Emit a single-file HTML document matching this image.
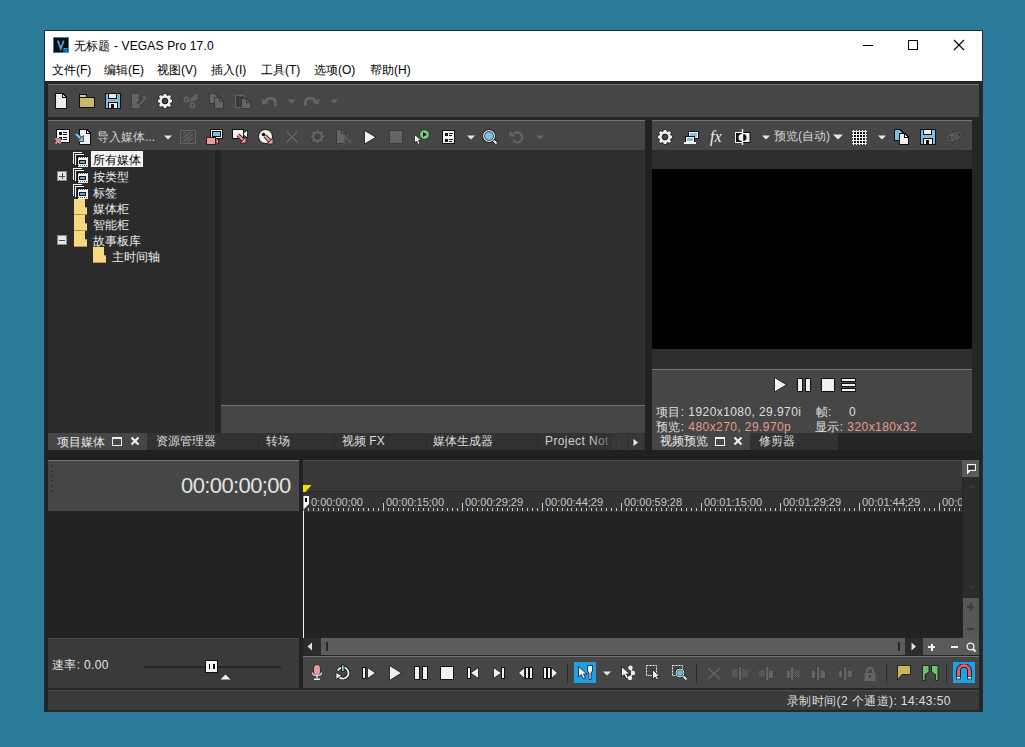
<!DOCTYPE html>
<html><head><meta charset="utf-8">
<style>
*{margin:0;padding:0;box-sizing:border-box}
html,body{width:1025px;height:747px;overflow:hidden;background:#2d7b9b;font-family:"Liberation Sans",sans-serif}
.a{position:absolute}
.t{position:absolute;white-space:nowrap;font-size:12px;line-height:14px}
svg{shape-rendering:crispEdges}
.g{shape-rendering:geometricPrecision}
</style></head><body>
<div class="a" style="left:44px;top:30px;width:939px;height:682px;background:#252525;border:1px solid #18303a"></div>
<div class="a" style="left:45px;top:31px;width:937px;height:50px;background:#fff;"></div>
<div class="a" style="left:53px;top:37px;width:16px;height:16px;background:#2f86bb;"></div>
<div class="a" style="left:54px;top:38px;width:14px;height:14px;background:#0c0c0c;"></div>
<svg class="a" style="left:53px;top:37px;shape-rendering:geometricPrecision" width="16" height="16" viewBox="0 0 16 16"><path d="M4.8 3.6L7.8 11.8L10.8 3.6" stroke="#45a8ec" stroke-width="1.7" fill="none"/><rect x="10.5" y="11" width="5.5" height="5" fill="#3b9ee0"/><rect x="11.5" y="12" width="1" height="3.2" fill="#0a2a50"/><path d="M13 12H15L14 15.2" stroke="#0a2a50" stroke-width="0.9" fill="none"/></svg>
<div class="t" style="left:74px;top:39px;color:#000;font-size:12px;letter-spacing:0.15px">无标题 - VEGAS Pro 17.0</div>
<div class="a" style="left:863px;top:45px;width:10px;height:1px;background:#000;"></div>
<div class="a" style="left:908px;top:40px;width:10px;height:10px;background:transparent;border:1px solid #000"></div>
<svg class="a" style="left:953px;top:39px;" width="12" height="12" viewBox="0 0 12 12"><path d="M1 1L11 11M11 1L1 11" stroke="#000" stroke-width="1.1" style="shape-rendering:geometricPrecision"/></svg>
<div class="t" style="left:52px;top:63px;color:#000;font-size:12px;">文件(F)</div>
<div class="t" style="left:104px;top:63px;color:#000;font-size:12px;">编辑(E)</div>
<div class="t" style="left:157px;top:63px;color:#000;font-size:12px;">视图(V)</div>
<div class="t" style="left:211px;top:63px;color:#000;font-size:12px;">插入(I)</div>
<div class="t" style="left:261px;top:63px;color:#000;font-size:12px;">工具(T)</div>
<div class="t" style="left:314px;top:63px;color:#000;font-size:12px;">选项(O)</div>
<div class="t" style="left:370px;top:63px;color:#000;font-size:12px;">帮助(H)</div>
<div class="a" style="left:48px;top:84px;width:931px;height:33px;background:#464646;border-top:1px solid #747474"></div>
<svg class="a" style="left:55px;top:93px;" width="12" height="16" viewBox="0 0 12 16"><path d="M0.5 0.5H8L11.5 4V15.5H0.5Z" fill="#eeeeee" stroke="#111" stroke-width="1"/><path d="M7.5 1V4.5H11" fill="none" stroke="#111"/></svg>
<svg class="a" style="left:79px;top:94px;" width="17" height="15" viewBox="0 0 17 15"><rect x="0.5" y="0.5" width="7" height="3" fill="#d8c88a" stroke="#111"/><rect x="0.5" y="3.5" width="15" height="10" fill="#cbb66a" stroke="#111"/></svg>
<svg class="a" style="left:105px;top:93px;" width="16" height="16" viewBox="0 0 16 16"><rect x="0.5" y="0.5" width="15" height="15" fill="#7cbde0" stroke="#111"/><rect x="3.5" y="0.5" width="8" height="5" fill="#eee" stroke="#111"/><rect x="3.5" y="9.5" width="9" height="6" fill="#eee" stroke="#111"/><rect x="6" y="11" width="3" height="5" fill="#111"/></svg>
<svg class="a" style="left:131px;top:93px;shape-rendering:geometricPrecision" width="17" height="16" viewBox="0 0 17 16"><path d="M0.5 0.5H7.5L9 2.5L7 4.5L9.5 6L6 10L9.5 13V15.5H0.5Z" fill="#646464" stroke="#3a3a3a" stroke-width="0.8"/><path d="M8 12L14 6" stroke="#3a3a3a" stroke-width="3.6"/><path d="M8 12L14 6" stroke="#646464" stroke-width="2"/><path d="M10 3H15.5V8.5Z" fill="#646464" stroke="#3a3a3a" stroke-width="0.6"/></svg>
<svg class="a" style="left:157px;top:93px;shape-rendering:geometricPrecision" width="16" height="16" viewBox="0 0 16 16"><path d="M13.54 5.91 L15.54 6.55 L15.54 9.45 L13.54 10.09 L13.39 10.44 L14.36 12.31 L12.31 14.36 L10.44 13.39 L10.09 13.54 L9.45 15.54 L6.55 15.54 L5.91 13.54 L5.56 13.39 L3.69 14.36 L1.64 12.31 L2.61 10.44 L2.46 10.09 L0.46 9.45 L0.46 6.55 L2.46 5.91 L2.61 5.56 L1.64 3.69 L3.69 1.64 L5.56 2.61 L5.91 2.46 L6.55 0.46 L9.45 0.46 L10.09 2.46 L10.44 2.61 L12.31 1.64 L14.36 3.69 L13.39 5.56Z" fill="#f2f2f2" stroke="#111" stroke-width="0.8" stroke-linejoin="round"/><circle cx="8.0" cy="8.0" r="2.88" fill="#454545" stroke="#111" stroke-width="0.9"/></svg>
<svg class="a" style="left:183px;top:93px;" width="16" height="16" viewBox="0 0 16 16"><g style="shape-rendering:geometricPrecision"><circle cx="3.5" cy="6.5" r="2.2" fill="none" stroke="#646464" stroke-width="1.6"/><circle cx="9.5" cy="12.5" r="2.2" fill="none" stroke="#646464" stroke-width="1.6"/><path d="M7.5 8.5L14.5 1.5M8 6L13 2.5L14 5L10 8" stroke="#646464" stroke-width="1.6" fill="none"/></g></svg>
<svg class="a" style="left:209px;top:93px;" width="16" height="16" viewBox="0 0 16 16"><path d="M0.5 0.5H6L8.5 3V10.5H0.5Z" fill="#646464" stroke="#3a3a3a"/><path d="M5.5 4.5H11L14.5 8V15.5H5.5Z" fill="#646464" stroke="#3a3a3a"/><path d="M10.5 5V8.5H14" fill="none" stroke="#3a3a3a"/></svg>
<svg class="a" style="left:235px;top:93px;" width="17" height="16" viewBox="0 0 17 16"><rect x="0.5" y="2.5" width="9" height="12" fill="#3c3c3c" stroke="#646464"/><rect x="2" y="4" width="6" height="9" fill="none" stroke="#333" stroke-width="0.8"/><rect x="3" y="0.5" width="4" height="3" fill="#646464" stroke="#3a3a3a" stroke-width="0.6"/><path d="M6.5 5.5H12L15.5 9V15.5H6.5Z" fill="#646464" stroke="#3a3a3a"/><path d="M11.5 6V9.5H15" fill="none" stroke="#3a3a3a"/></svg>
<svg class="a" style="left:261px;top:95px;" width="17" height="13" viewBox="0 0 17 13"><g style="shape-rendering:geometricPrecision"><path d="M4.5 6.5C7 1.5 14.5 2 14.5 8V11" stroke="#646464" stroke-width="2.6" fill="none"/><path d="M0.5 3.5L7.5 7.5L1.5 10Z" fill="#646464"/></g></svg>
<svg class="a" style="left:287px;top:99px;" width="9" height="6" viewBox="0 0 9 6"><path d="M0.5 0.5H8.5L4.5 4.5Z" fill="#646464" style="shape-rendering:geometricPrecision"/></svg>
<svg class="a" style="left:303px;top:95px;" width="17" height="13" viewBox="0 0 17 13"><g style="shape-rendering:geometricPrecision"><path d="M12.5 6.5C10 1.5 2.5 2 2.5 8V11" stroke="#646464" stroke-width="2.6" fill="none"/><path d="M16.5 3.5L9.5 7.5L15.5 10Z" fill="#646464"/></g></svg>
<svg class="a" style="left:330px;top:99px;" width="9" height="6" viewBox="0 0 9 6"><path d="M0.5 0.5H8.5L4.5 4.5Z" fill="#646464" style="shape-rendering:geometricPrecision"/></svg>
<div class="a" style="left:645px;top:120px;width:7px;height:330px;background:#222;"></div>
<div class="a" style="left:48px;top:120px;width:597px;height:30px;background:#464646;border-top:1px solid #747474"></div>
<div class="a" style="left:48px;top:150px;width:161px;height:283px;background:#2b2b2b;"></div>
<div class="a" style="left:209px;top:150px;width:6px;height:283px;background:#2e2e2e;"></div>
<div class="a" style="left:215px;top:150px;width:6px;height:283px;background:#242424;"></div>
<div class="a" style="left:221px;top:150px;width:424px;height:255px;background:#2e2e2e;"></div>
<div class="a" style="left:221px;top:405px;width:424px;height:28px;background:#464646;border-top:1px solid #747474"></div>
<svg class="a" style="left:56px;top:129px;" width="14" height="14" viewBox="0 0 14 14"><rect x="0.5" y="0.5" width="13" height="13" fill="#f4f4f4" stroke="#111"/><rect x="3" y="3" width="3" height="3" fill="#111"/><rect x="3" y="8" width="3" height="3" fill="#111"/><rect x="7" y="3" width="4" height="1" fill="#111"/><rect x="7" y="5" width="4" height="1" fill="#111"/><rect x="7" y="8" width="4" height="1" fill="#111"/><rect x="7" y="10" width="4" height="1" fill="#111"/></svg>
<svg class="a" style="left:54px;top:137px;shape-rendering:geometricPrecision" width="8" height="8" viewBox="0 0 8 8"><path d="M1.5 1.5L6.5 6.5M6.5 1.5L1.5 6.5" stroke="#3a1c1c" stroke-width="3"/><path d="M1.5 1.5L6.5 6.5M6.5 1.5L1.5 6.5" stroke="#e89aa2" stroke-width="1.8"/></svg>
<svg class="a" style="left:79px;top:129px;" width="12" height="16" viewBox="0 0 12 16"><path d="M0.5 0.5H8L11.5 4V15.5H0.5Z" fill="#f0f0f0" stroke="#111"/><path d="M7.5 1V4.5H11" fill="none" stroke="#111" stroke-width="1.2"/></svg>
<svg class="a" style="left:74px;top:132px;shape-rendering:geometricPrecision" width="12" height="12" viewBox="0 0 12 12"><path d="M2 2L8 8" stroke="#1c3440" stroke-width="4"/><path d="M2 2L8 8" stroke="#80c4dc" stroke-width="2.4"/><path d="M9.5 3.5V9.5H3.5Z" fill="#80c4dc" stroke="#1c3440" stroke-width="0.8"/></svg>
<div class="t" style="left:97px;top:130px;color:#d4d4d4;font-size:12px;">导入媒体...</div>
<svg class="a" style="left:164px;top:135px;shape-rendering:geometricPrecision" width="8" height="5" viewBox="0 0 8 5"><path d="M0 0.5H8L4 4.5Z" fill="#e6e6e6"/></svg>
<svg class="a" style="left:180px;top:130px;shape-rendering:geometricPrecision" width="16" height="14" viewBox="0 0 16 14"><rect x="0.5" y="0.5" width="15" height="13" fill="none" stroke="#646464"/><path d="M3 4L6 2M3 8L11 2M3 12L13 4M7 12L13 8" stroke="#646464" stroke-width="1.4"/></svg>
<svg class="a" style="left:206px;top:129px;" width="17" height="16" viewBox="0 0 17 16"><rect x="4.5" y="0.5" width="12" height="9" fill="#f2f2f2" stroke="#111"/><rect x="6.5" y="2.5" width="8" height="5" fill="#7cc0e0" stroke="#111"/><rect x="0.5" y="8.5" width="9" height="7" fill="#e89aa2" stroke="#3a1a1a"/><path d="M9.5 11L12 9.5V15L9.5 13.5Z" fill="#e89aa2" stroke="#3a1a1a" stroke-width="0.8"/></svg>
<svg class="a" style="left:232px;top:129px;shape-rendering:geometricPrecision" width="17" height="16" viewBox="0 0 17 16"><rect x="0.5" y="0.5" width="11" height="9" fill="#f2f2f2" stroke="#111"/><path d="M11.5 4L15.5 1V9L11.5 6Z" fill="#f2f2f2" stroke="#111" stroke-width="0.8"/><path d="M6 6L12 12" stroke="#3a1a1a" stroke-width="4"/><path d="M6 6L12 12" stroke="#e89aa2" stroke-width="2.4"/><path d="M14 8V14H8Z" fill="#e89aa2" stroke="#3a1a1a" stroke-width="0.8"/></svg>
<svg class="a" style="left:258px;top:129px;shape-rendering:geometricPrecision" width="17" height="16" viewBox="0 0 17 16"><circle cx="7.5" cy="7.5" r="7" fill="#f2f2f2" stroke="#111"/><circle cx="5.5" cy="5.5" r="1.8" fill="#111"/><path d="M7 7L12.5 12.5" stroke="#3a1a1a" stroke-width="4"/><path d="M7 7L12.5 12.5" stroke="#e89aa2" stroke-width="2.4"/><path d="M15 9V15H9Z" fill="#e89aa2" stroke="#3a1a1a" stroke-width="0.8"/></svg>
<svg class="a" style="left:285px;top:130px;shape-rendering:geometricPrecision" width="14" height="14" viewBox="0 0 14 14"><path d="M1.5 1.5L12.5 12.5M12.5 1.5L1.5 12.5" stroke="#646464" stroke-width="1.6"/></svg>
<svg class="a" style="left:310px;top:129px;shape-rendering:geometricPrecision" width="15" height="15" viewBox="0 0 15 15"><path d="M12.69 5.54 L14.57 6.14 L14.57 8.86 L12.69 9.46 L12.56 9.79 L13.46 11.54 L11.54 13.46 L9.79 12.56 L9.46 12.69 L8.86 14.57 L6.14 14.57 L5.54 12.69 L5.21 12.56 L3.46 13.46 L1.54 11.54 L2.44 9.79 L2.31 9.46 L0.43 8.86 L0.43 6.14 L2.31 5.54 L2.44 5.21 L1.54 3.46 L3.46 1.54 L5.21 2.44 L5.54 2.31 L6.14 0.43 L8.86 0.43 L9.46 2.31 L9.79 2.44 L11.54 1.54 L13.46 3.46 L12.56 5.21Z" fill="#646464" stroke="#3a3a3a" stroke-width="0.8" stroke-linejoin="round"/><circle cx="7.5" cy="7.5" r="2.70" fill="#464646" stroke="#3a3a3a" stroke-width="0.9"/></svg>
<svg class="a" style="left:336px;top:129px;shape-rendering:geometricPrecision" width="17" height="16" viewBox="0 0 17 16"><path d="M0.5 0.5H6L9.5 4V14.5H0.5Z" fill="#646464" stroke="#3a3a3a"/><path d="M5.5 1V4.5H9" fill="none" stroke="#3a3a3a"/><path d="M7 15.5C9 15.5 9.5 12 10 9C10.5 6 11 5 13 5M8.5 9H12.5M11.5 10L15.5 14.5M15.5 10L11.5 14.5" fill="none" stroke="#3a3a3a" stroke-width="2.4"/><path d="M7 15.5C9 15.5 9.5 12 10 9C10.5 6 11 5 13 5M8.5 9H12.5M11.5 10L15.5 14.5M15.5 10L11.5 14.5" fill="none" stroke="#646464" stroke-width="1.2"/></svg>
<svg class="a" style="left:364px;top:130px;shape-rendering:geometricPrecision" width="13" height="15" viewBox="0 0 13 15"><path d="M0.5 0.5L12 7.25L0.5 14Z" fill="#f2f2f2" stroke="#111" stroke-width="0.8"/></svg>
<svg class="a" style="left:389px;top:130px;" width="14" height="14" viewBox="0 0 14 14"><rect x="0.5" y="0.5" width="13" height="13" fill="#646464" stroke="#3c3c3c"/></svg>
<svg class="a" style="left:413px;top:129px;shape-rendering:geometricPrecision" width="18" height="16" viewBox="0 0 18 16"><path d="M1.5 5.5V14L3.5 12L5.5 15.5L7 14.5L5.5 11.5H8.5Z" fill="#f2f2f2" stroke="#111" stroke-width="0.7"/><circle cx="11.5" cy="5.5" r="4.8" fill="#7ccf84" stroke="#173a1a" stroke-width="0.9"/><path d="M10 3V8L14 5.5Z" fill="#111"/></svg>
<svg class="a" style="left:442px;top:130px;" width="13" height="14" viewBox="0 0 13 14"><rect x="0.5" y="0.5" width="12" height="13" fill="#f4f4f4" stroke="#111"/><rect x="2.5" y="2.5" width="3" height="3" fill="#111"/><rect x="2.5" y="8.5" width="3" height="3" fill="#111"/><rect x="7" y="3" width="4" height="1" fill="#111"/><rect x="7" y="5" width="3" height="1" fill="#111"/><rect x="7" y="9" width="4" height="1" fill="#111"/><rect x="7" y="11" width="3" height="1" fill="#111"/></svg>
<svg class="a" style="left:467px;top:135px;shape-rendering:geometricPrecision" width="8" height="5" viewBox="0 0 8 5"><path d="M0 0.5H8L4 4.5Z" fill="#e6e6e6"/></svg>
<svg class="a" style="left:482px;top:129px;shape-rendering:geometricPrecision" width="17" height="16" viewBox="0 0 17 16"><path d="M10 10L14.5 14.5" stroke="#111" stroke-width="3.6"/><path d="M10 10L14.5 14.5" stroke="#f2f2f2" stroke-width="2"/><circle cx="7" cy="7" r="5.4" fill="#7cc0e0" stroke="#111" stroke-width="2.6"/><circle cx="7" cy="7" r="5.4" fill="none" stroke="#f2f2f2" stroke-width="1.2"/></svg>
<svg class="a" style="left:509px;top:129px;shape-rendering:geometricPrecision" width="16" height="16" viewBox="0 0 16 16"><path d="M4.5 5A5 5 0 1 1 4 11" stroke="#646464" stroke-width="2.2" fill="none"/><path d="M0.5 1.5V7.5H6.5Z" fill="#646464"/></svg>
<svg class="a" style="left:536px;top:135px;shape-rendering:geometricPrecision" width="8" height="5" viewBox="0 0 8 5"><path d="M0 0.5H8L4 4.5Z" fill="#646464"/></svg>
<div class="a" style="left:652px;top:120px;width:320px;height:30px;background:#464646;border-top:1px solid #747474"></div>
<div class="a" style="left:652px;top:150px;width:320px;height:19px;background:#2e2e2e;"></div>
<div class="a" style="left:652px;top:169px;width:320px;height:180px;background:#000;"></div>
<div class="a" style="left:652px;top:349px;width:320px;height:20px;background:#2e2e2e;"></div>
<div class="a" style="left:652px;top:369px;width:320px;height:64px;background:#464646;border-top:1px solid #747474"></div>
<svg class="a" style="left:657px;top:129px;shape-rendering:geometricPrecision" width="16" height="16" viewBox="0 0 16 16"><path d="M13.54 5.91 L15.54 6.55 L15.54 9.45 L13.54 10.09 L13.39 10.44 L14.36 12.31 L12.31 14.36 L10.44 13.39 L10.09 13.54 L9.45 15.54 L6.55 15.54 L5.91 13.54 L5.56 13.39 L3.69 14.36 L1.64 12.31 L2.61 10.44 L2.46 10.09 L0.46 9.45 L0.46 6.55 L2.46 5.91 L2.61 5.56 L1.64 3.69 L3.69 1.64 L5.56 2.61 L5.91 2.46 L6.55 0.46 L9.45 0.46 L10.09 2.46 L10.44 2.61 L12.31 1.64 L14.36 3.69 L13.39 5.56Z" fill="#f2f2f2" stroke="#111" stroke-width="0.8" stroke-linejoin="round"/><circle cx="8.0" cy="8.0" r="2.88" fill="#454545" stroke="#111" stroke-width="0.9"/></svg>
<svg class="a" style="left:683px;top:129px;" width="17" height="16" viewBox="0 0 17 16"><rect x="4.5" y="1.5" width="11" height="8" fill="#111"/><rect x="5.5" y="2.5" width="9" height="6" fill="#f2f2f2"/><rect x="6.5" y="3.5" width="7" height="4" fill="#7cc0e0"/><rect x="1.5" y="6.5" width="10" height="8" fill="#111"/><rect x="2.5" y="7.5" width="8" height="5" fill="#f2f2f2"/><rect x="3.5" y="8.5" width="6" height="3" fill="#7cc0e0"/><rect x="0.5" y="13" width="12" height="2" fill="#f2f2f2"/></svg>
<div class="t" style="left:710px;top:128px;color:#f0f0f0;font-size:16px;font-family:'Liberation Serif',serif;line-height:18px"><i>fx</i></div>
<svg class="a" style="left:735px;top:129px;shape-rendering:geometricPrecision" width="17" height="16" viewBox="0 0 17 16"><rect x="0.5" y="3.5" width="7" height="10" fill="#111" stroke="#f2f2f2"/><rect x="7.5" y="3.5" width="7.5" height="10" fill="#f2f2f2" stroke="#111"/><path d="M7 5A3.5 3.5 0 0 0 7 12Z" fill="#f2f2f2"/><path d="M8 5A3.5 3.5 0 0 1 8 12Z" fill="#111"/><rect x="6.8" y="0" width="1.4" height="16" fill="#f2f2f2"/></svg>
<svg class="a" style="left:762px;top:135px;shape-rendering:geometricPrecision" width="8" height="5" viewBox="0 0 8 5"><path d="M0 0.5H8L4 4.5Z" fill="#e6e6e6"/></svg>
<div class="t" style="left:774px;top:129px;color:#d4d4d4;font-size:12px;">预览(自动)</div>
<svg class="a" style="left:833px;top:134px;shape-rendering:geometricPrecision" width="10" height="6" viewBox="0 0 10 6"><path d="M0 0.5H10L5 5.5Z" fill="#e6e6e6"/></svg>
<svg class="a" style="left:852px;top:130px;" width="15" height="15" viewBox="0 0 15 15"><rect x="1" y="1" width="13" height="13" fill="#111"/><rect x="1" y="0" width="1" height="15" fill="#f2f2f2"/><rect x="0" y="1" width="15" height="1" fill="#f2f2f2"/><rect x="4" y="0" width="1" height="15" fill="#f2f2f2"/><rect x="0" y="4" width="15" height="1" fill="#f2f2f2"/><rect x="7" y="0" width="1" height="15" fill="#f2f2f2"/><rect x="0" y="7" width="15" height="1" fill="#f2f2f2"/><rect x="10" y="0" width="1" height="15" fill="#f2f2f2"/><rect x="0" y="10" width="15" height="1" fill="#f2f2f2"/><rect x="13" y="0" width="1" height="15" fill="#f2f2f2"/><rect x="0" y="13" width="15" height="1" fill="#f2f2f2"/></svg>
<svg class="a" style="left:878px;top:135px;shape-rendering:geometricPrecision" width="8" height="5" viewBox="0 0 8 5"><path d="M0 0.5H8L4 4.5Z" fill="#e6e6e6"/></svg>
<svg class="a" style="left:894px;top:129px;" width="17" height="16" viewBox="0 0 17 16"><path d="M0.5 0.5H6L9.5 4V11.5H0.5Z" fill="#7cc0e0" stroke="#111"/><path d="M5.5 4.5H11L14.5 8V15.5H5.5Z" fill="#f2f2f2" stroke="#111"/><path d="M10.5 5V8.5H14" fill="none" stroke="#111"/></svg>
<svg class="a" style="left:920px;top:129px;" width="16" height="16" viewBox="0 0 16 16"><rect x="0.5" y="0.5" width="15" height="15" fill="#7cbde0" stroke="#111"/><rect x="3.5" y="0.5" width="8" height="5" fill="#eee" stroke="#111"/><rect x="3.5" y="9.5" width="9" height="6" fill="#eee" stroke="#111"/><rect x="6" y="11" width="3" height="5" fill="#111"/></svg>
<svg class="a" style="left:945px;top:128px;shape-rendering:geometricPrecision" width="18" height="17" viewBox="0 0 18 17"><g transform="rotate(-20 9 8.5)"><ellipse cx="9" cy="8.5" rx="3" ry="7" fill="none" stroke="#333" stroke-width="2.2"/><ellipse cx="9" cy="8.5" rx="7.5" ry="3.2" fill="none" stroke="#333" stroke-width="2.2"/><ellipse cx="9" cy="8.5" rx="3" ry="7" fill="none" stroke="#646464" stroke-width="1"/><ellipse cx="9" cy="8.5" rx="7.5" ry="3.2" fill="none" stroke="#646464" stroke-width="1"/></g><text x="6" y="11" font-size="6.5" fill="#646464" font-family="Liberation Sans" font-weight="bold">50</text></svg>
<div class="a" style="left:48px;top:433px;width:597px;height:17px;background:#323232;"></div>
<div class="a" style="left:48px;top:433px;width:99px;height:17px;background:#464646;"></div>
<div class="a" style="left:652px;top:433px;width:98px;height:17px;background:#464646;"></div>
<div class="a" style="left:750px;top:433px;width:88px;height:17px;background:#323232;"></div>
<svg class="a" style="left:73px;top:152px;" width="16" height="16" viewBox="0 0 16 16"><path d="M0.5 12V0.5H9" fill="none" stroke="#f2f2f2"/><path d="M2.5 13V2.5H11" fill="none" stroke="#f2f2f2"/><rect x="3.5" y="3.5" width="11" height="11" fill="#111"/><rect x="4.5" y="4.5" width="10" height="10" fill="#f2f2f2"/><path d="M5 5.5H14M5 13.5H14" stroke="#555" stroke-dasharray="1 1"/><rect x="5.5" y="7.5" width="7" height="4" fill="#111"/><rect x="6.5" y="8.5" width="5" height="2" fill="#6aa8c8"/></svg>
<div class="a" style="left:91px;top:151px;width:52px;height:16px;background:#f4f4f4;"></div>
<div class="t" style="left:93px;top:153px;color:#000;font-size:12px;">所有媒体</div>
<svg class="a" style="left:57px;top:171px;" width="10" height="10" viewBox="0 0 10 10"><rect x="0.5" y="0.5" width="9" height="9" fill="#e8e8e8" stroke="#888"/><rect x="2" y="4.5" width="6" height="1" fill="#3a4a7a"/><rect x="4.5" y="2" width="1" height="6" fill="#3a4a7a"/></svg>
<svg class="a" style="left:73px;top:168px;" width="16" height="16" viewBox="0 0 16 16"><path d="M0.5 12V0.5H9" fill="none" stroke="#f2f2f2"/><path d="M2.5 13V2.5H11" fill="none" stroke="#f2f2f2"/><rect x="3.5" y="3.5" width="11" height="11" fill="#111"/><rect x="4.5" y="4.5" width="10" height="10" fill="#f2f2f2"/><path d="M5 5.5H14M5 13.5H14" stroke="#555" stroke-dasharray="1 1"/><rect x="5.5" y="7.5" width="7" height="4" fill="#111"/><rect x="6.5" y="8.5" width="5" height="2" fill="#6aa8c8"/></svg>
<div class="t" style="left:93px;top:170px;color:#ececec;font-size:12px;">按类型</div>
<svg class="a" style="left:73px;top:184px;" width="16" height="16" viewBox="0 0 16 16"><path d="M0.5 12V0.5H9" fill="none" stroke="#f2f2f2"/><path d="M2.5 13V2.5H11" fill="none" stroke="#f2f2f2"/><rect x="3.5" y="3.5" width="11" height="11" fill="#111"/><rect x="4.5" y="4.5" width="10" height="10" fill="#f2f2f2"/><path d="M5 5.5H14M5 13.5H14" stroke="#555" stroke-dasharray="1 1"/><rect x="5.5" y="7.5" width="7" height="4" fill="#111"/><rect x="6.5" y="8.5" width="5" height="2" fill="#6aa8c8"/></svg>
<div class="t" style="left:93px;top:186px;color:#ececec;font-size:12px;">标签</div>
<svg class="a" style="left:74px;top:199px;" width="14" height="16" viewBox="0 0 14 16"><path d="M0 0H11V8H13V16H0Z" fill="#f6d97e"/><path d="M0 15.5H13" stroke="#b49a40"/><path d="M10.5 8.5H13" stroke="#b49a40"/></svg>
<div class="t" style="left:93px;top:202px;color:#ececec;font-size:12px;">媒体柜</div>
<svg class="a" style="left:74px;top:215px;" width="14" height="16" viewBox="0 0 14 16"><path d="M0 0H11V8H13V16H0Z" fill="#f6d97e"/><path d="M0 15.5H13" stroke="#b49a40"/><path d="M10.5 8.5H13" stroke="#b49a40"/></svg>
<div class="t" style="left:93px;top:218px;color:#ececec;font-size:12px;">智能柜</div>
<svg class="a" style="left:57px;top:235px;" width="10" height="10" viewBox="0 0 10 10"><rect x="0.5" y="0.5" width="9" height="9" fill="#e8e8e8" stroke="#888"/><rect x="2" y="4.5" width="6" height="1" fill="#3a4a7a"/></svg>
<svg class="a" style="left:74px;top:231px;" width="14" height="16" viewBox="0 0 14 16"><path d="M0 0H11V8H13V16H0Z" fill="#f6d97e"/><path d="M0 15.5H13" stroke="#b49a40"/><path d="M10.5 8.5H13" stroke="#b49a40"/></svg>
<div class="t" style="left:93px;top:234px;color:#ececec;font-size:12px;">故事板库</div>
<svg class="a" style="left:93px;top:247px;" width="14" height="16" viewBox="0 0 14 16"><path d="M0 0H11V8H13V16H0Z" fill="#f6d97e"/><path d="M0 15.5H13" stroke="#b49a40"/><path d="M10.5 8.5H13" stroke="#b49a40"/></svg>
<div class="t" style="left:112px;top:250px;color:#ececec;font-size:12px;">主时间轴</div>
<div class="t" style="left:57px;top:435px;color:#e8e8e8;font-size:12px;">项目媒体</div>
<svg class="a" style="left:112px;top:436px;" width="10" height="10" viewBox="0 0 10 10"><rect x="0.5" y="1.5" width="9" height="8" fill="none" stroke="#f0f0f0"/><rect x="1" y="2" width="8" height="1" fill="#f0f0f0"/></svg>
<svg class="a" style="left:130px;top:436px;shape-rendering:geometricPrecision" width="10" height="10" viewBox="0 0 10 10"><path d="M1.5 1.5L8.5 8.5M8.5 1.5L1.5 8.5" stroke="#f0f0f0" stroke-width="2.2"/></svg>
<div class="a" style="left:258px;top:435px;width:1px;height:15px;background:#2a2a2a;"></div>
<div class="a" style="left:334px;top:435px;width:1px;height:15px;background:#2a2a2a;"></div>
<div class="a" style="left:426px;top:435px;width:1px;height:15px;background:#2a2a2a;"></div>
<div class="a" style="left:537px;top:435px;width:1px;height:15px;background:#2a2a2a;"></div>
<div class="t" style="left:156px;top:434px;color:#dcdcdc;font-size:12px;">资源管理器</div>
<div class="t" style="left:266px;top:434px;color:#dcdcdc;font-size:12px;">转场</div>
<div class="t" style="left:342px;top:434px;color:#dcdcdc;font-size:12px;">视频 FX</div>
<div class="t" style="left:433px;top:434px;color:#dcdcdc;font-size:12px;">媒体生成器</div>
<div class="t" style="left:545px;top:434px;color:#d0d0d0;font-size:12px;letter-spacing:0.4px">Project Not</div>
<div class="a" style="left:590px;top:434px;width:22px;height:16px;background:linear-gradient(90deg,rgba(50,50,50,0),rgba(50,50,50,0.85));"></div>
<div class="a" style="left:612px;top:434px;width:15px;height:16px;background:#383838;"></div>
<div class="a" style="left:619px;top:439px;width:1px;height:8px;background:#444;"></div>
<div class="a" style="left:629px;top:434px;width:15px;height:16px;background:#383838;"></div>
<svg class="a" style="left:633px;top:439px;shape-rendering:geometricPrecision" width="6" height="8" viewBox="0 0 6 8"><path d="M0.5 0V7L5 3.5Z" fill="#f0f0f0"/></svg>
<div class="t" style="left:660px;top:434px;color:#e8e8e8;font-size:12px;">视频预览</div>
<svg class="a" style="left:715px;top:436px;" width="10" height="10" viewBox="0 0 10 10"><rect x="0.5" y="1.5" width="9" height="8" fill="none" stroke="#f0f0f0"/><rect x="1" y="2" width="8" height="1" fill="#f0f0f0"/></svg>
<svg class="a" style="left:733px;top:436px;shape-rendering:geometricPrecision" width="10" height="10" viewBox="0 0 10 10"><path d="M1.5 1.5L8.5 8.5M8.5 1.5L1.5 8.5" stroke="#f0f0f0" stroke-width="2.2"/></svg>
<div class="t" style="left:759px;top:434px;color:#dcdcdc;font-size:12px;">修剪器</div>
<svg class="a" style="left:774px;top:377px;shape-rendering:geometricPrecision" width="13" height="16" viewBox="0 0 13 16"><path d="M0.5 0.5L12.5 7.75L0.5 15Z" fill="#f0f0f0" stroke="#111" stroke-width="0.8"/></svg>
<svg class="a" style="left:797px;top:378px;" width="14" height="14" viewBox="0 0 14 14"><rect x="0.5" y="0.5" width="5" height="13" fill="#f0f0f0" stroke="#111"/><rect x="8.5" y="0.5" width="5" height="13" fill="#f0f0f0" stroke="#111"/></svg>
<svg class="a" style="left:821px;top:378px;" width="14" height="14" viewBox="0 0 14 14"><rect x="0.5" y="0.5" width="13" height="13" fill="#f0f0f0" stroke="#111"/></svg>
<svg class="a" style="left:841px;top:378px;" width="15" height="14" viewBox="0 0 15 14"><rect x="0.5" y="0.5" width="14" height="3" fill="#f0f0f0" stroke="#111"/><rect x="0.5" y="5.5" width="14" height="3" fill="#f0f0f0" stroke="#111"/><rect x="0.5" y="10.5" width="14" height="3" fill="#f0f0f0" stroke="#111"/></svg>
<div class="t" style="left:656px;top:405px;color:#dedede;font-size:12px;letter-spacing:0.42px">项目: 1920x1080, 29.970i</div>
<div class="t" style="left:656px;top:420px;color:#dedede;font-size:12px;letter-spacing:0.42px">预览: <span style="color:#e69a8e">480x270, 29.970p</span></div>
<div class="t" style="left:816px;top:405px;color:#dedede;font-size:12px;">帧:</div>
<div class="t" style="left:849px;top:405px;color:#dedede;font-size:12px;">0</div>
<div class="t" style="left:815px;top:420px;color:#dedede;font-size:12px;letter-spacing:0.42px">显示: <span style="color:#e69a8e">320x180x32</span></div>
<div class="a" style="left:45px;top:450px;width:937px;height:10px;background:#202020;"></div>
<div class="a" style="left:299px;top:460px;width:4px;height:228px;background:#222;"></div>
<div class="a" style="left:48px;top:460px;width:251px;height:51px;background:#464646;border-top:1px solid #747474"></div>
<div class="a" style="left:303px;top:460px;width:659px;height:32px;background:#393939;border-top:1px solid #4a4a4a"></div>
<div class="a" style="left:303px;top:491px;width:659px;height:1px;background:#2a2a2a;"></div>
<div class="a" style="left:303px;top:492px;width:659px;height:20px;background:#333;"></div>
<div class="a" style="left:303px;top:512px;width:659px;height:126px;background:#232323;"></div>
<div class="a" style="left:962px;top:460px;width:17px;height:17px;background:#5a5a5a;"></div>
<div class="a" style="left:963px;top:477px;width:16px;height:121px;background:#2c2c2c;"></div>
<div class="a" style="left:963px;top:598px;width:16px;height:40px;background:#575757;"></div>
<div class="a" style="left:45px;top:511px;width:258px;height:127px;background:#232323;"></div>
<div class="a" style="left:48px;top:638px;width:251px;height:50px;background:#3a3a3a;border-top:1px solid #4a4a4a"></div>
<div class="a" style="left:303px;top:638px;width:18px;height:17px;background:#2c2c2c;"></div>
<div class="a" style="left:321px;top:638px;width:584px;height:17px;background:#5c5c5c;"></div>
<div class="a" style="left:905px;top:638px;width:18px;height:17px;background:#2c2c2c;"></div>
<div class="a" style="left:923px;top:638px;width:56px;height:17px;background:#5a5a5a;"></div>
<div class="a" style="left:303px;top:656px;width:676px;height:32px;background:#464646;border-top:1px solid #747474"></div>
<div class="a" style="left:48px;top:690px;width:931px;height:20px;background:#3a3a3a;border-top:1px solid #4c4c4c"></div>
<div class="a" style="left:51px;top:465px;width:2px;height:2px;background:#363636;"></div>
<div class="a" style="left:51px;top:470px;width:2px;height:2px;background:#363636;"></div>
<div class="a" style="left:51px;top:475px;width:2px;height:2px;background:#363636;"></div>
<div class="a" style="left:51px;top:480px;width:2px;height:2px;background:#363636;"></div>
<div class="a" style="left:51px;top:485px;width:2px;height:2px;background:#363636;"></div>
<div class="a" style="left:51px;top:490px;width:2px;height:2px;background:#363636;"></div>
<div class="t" style="left:181px;top:473px;color:#e2e2e2;font-size:22px;line-height:26px;letter-spacing:-0.6px">00:00:00;00</div>
<div class="a" style="left:303px;top:492px;width:659px;height:20px;overflow:hidden">
<div class="t" style="left:8px;top:4px;color:#c4c4c4;font-size:11px;line-height:13px">0:00:00;00</div>
<div class="t" style="left:83px;top:4px;color:#c4c4c4;font-size:11px;line-height:13px">00:00:15;00</div>
<div class="t" style="left:162px;top:4px;color:#c4c4c4;font-size:11px;line-height:13px">00:00:29;29</div>
<div class="t" style="left:242px;top:4px;color:#c4c4c4;font-size:11px;line-height:13px">00:00:44;29</div>
<div class="t" style="left:321px;top:4px;color:#c4c4c4;font-size:11px;line-height:13px">00:00:59;28</div>
<div class="t" style="left:401px;top:4px;color:#c4c4c4;font-size:11px;line-height:13px">00:01:15;00</div>
<div class="t" style="left:480px;top:4px;color:#c4c4c4;font-size:11px;line-height:13px">00:01:29;29</div>
<div class="t" style="left:559px;top:4px;color:#c4c4c4;font-size:11px;line-height:13px">00:01:44;29</div>
<div class="t" style="left:639px;top:4px;color:#c4c4c4;font-size:11px;line-height:13px">00:00:00;00</div>
<svg class="a" style="left:0;top:0" width="659" height="20"><rect x="0" y="11" width="1" height="8" fill="#c8c8c8"/><rect x="5" y="16" width="1" height="3" fill="#c8c8c8"/><rect x="10" y="16" width="1" height="3" fill="#c8c8c8"/><rect x="15" y="16" width="1" height="3" fill="#c8c8c8"/><rect x="20" y="16" width="1" height="3" fill="#c8c8c8"/><rect x="25" y="16" width="1" height="3" fill="#c8c8c8"/><rect x="30" y="16" width="1" height="3" fill="#c8c8c8"/><rect x="35" y="16" width="1" height="3" fill="#c8c8c8"/><rect x="40" y="16" width="1" height="3" fill="#c8c8c8"/><rect x="45" y="16" width="1" height="3" fill="#c8c8c8"/><rect x="50" y="16" width="1" height="3" fill="#c8c8c8"/><rect x="55" y="16" width="1" height="3" fill="#c8c8c8"/><rect x="60" y="16" width="1" height="3" fill="#c8c8c8"/><rect x="65" y="16" width="1" height="3" fill="#c8c8c8"/><rect x="70" y="16" width="1" height="3" fill="#c8c8c8"/><rect x="75" y="16" width="1" height="3" fill="#c8c8c8"/><rect x="80" y="11" width="1" height="8" fill="#c8c8c8"/><rect x="85" y="16" width="1" height="3" fill="#c8c8c8"/><rect x="90" y="16" width="1" height="3" fill="#c8c8c8"/><rect x="95" y="16" width="1" height="3" fill="#c8c8c8"/><rect x="100" y="16" width="1" height="3" fill="#c8c8c8"/><rect x="105" y="16" width="1" height="3" fill="#c8c8c8"/><rect x="110" y="16" width="1" height="3" fill="#c8c8c8"/><rect x="115" y="16" width="1" height="3" fill="#c8c8c8"/><rect x="120" y="16" width="1" height="3" fill="#c8c8c8"/><rect x="125" y="16" width="1" height="3" fill="#c8c8c8"/><rect x="130" y="16" width="1" height="3" fill="#c8c8c8"/><rect x="134" y="16" width="1" height="3" fill="#c8c8c8"/><rect x="139" y="16" width="1" height="3" fill="#c8c8c8"/><rect x="144" y="16" width="1" height="3" fill="#c8c8c8"/><rect x="149" y="16" width="1" height="3" fill="#c8c8c8"/><rect x="154" y="16" width="1" height="3" fill="#c8c8c8"/><rect x="159" y="11" width="1" height="8" fill="#c8c8c8"/><rect x="164" y="16" width="1" height="3" fill="#c8c8c8"/><rect x="169" y="16" width="1" height="3" fill="#c8c8c8"/><rect x="174" y="16" width="1" height="3" fill="#c8c8c8"/><rect x="179" y="16" width="1" height="3" fill="#c8c8c8"/><rect x="184" y="16" width="1" height="3" fill="#c8c8c8"/><rect x="189" y="16" width="1" height="3" fill="#c8c8c8"/><rect x="194" y="16" width="1" height="3" fill="#c8c8c8"/><rect x="199" y="16" width="1" height="3" fill="#c8c8c8"/><rect x="204" y="16" width="1" height="3" fill="#c8c8c8"/><rect x="209" y="16" width="1" height="3" fill="#c8c8c8"/><rect x="214" y="16" width="1" height="3" fill="#c8c8c8"/><rect x="219" y="16" width="1" height="3" fill="#c8c8c8"/><rect x="224" y="16" width="1" height="3" fill="#c8c8c8"/><rect x="229" y="16" width="1" height="3" fill="#c8c8c8"/><rect x="234" y="16" width="1" height="3" fill="#c8c8c8"/><rect x="239" y="11" width="1" height="8" fill="#c8c8c8"/><rect x="244" y="16" width="1" height="3" fill="#c8c8c8"/><rect x="249" y="16" width="1" height="3" fill="#c8c8c8"/><rect x="254" y="16" width="1" height="3" fill="#c8c8c8"/><rect x="259" y="16" width="1" height="3" fill="#c8c8c8"/><rect x="264" y="16" width="1" height="3" fill="#c8c8c8"/><rect x="268" y="16" width="1" height="3" fill="#c8c8c8"/><rect x="273" y="16" width="1" height="3" fill="#c8c8c8"/><rect x="278" y="16" width="1" height="3" fill="#c8c8c8"/><rect x="283" y="16" width="1" height="3" fill="#c8c8c8"/><rect x="288" y="16" width="1" height="3" fill="#c8c8c8"/><rect x="293" y="16" width="1" height="3" fill="#c8c8c8"/><rect x="298" y="16" width="1" height="3" fill="#c8c8c8"/><rect x="303" y="16" width="1" height="3" fill="#c8c8c8"/><rect x="308" y="16" width="1" height="3" fill="#c8c8c8"/><rect x="313" y="16" width="1" height="3" fill="#c8c8c8"/><rect x="318" y="11" width="1" height="8" fill="#c8c8c8"/><rect x="323" y="16" width="1" height="3" fill="#c8c8c8"/><rect x="328" y="16" width="1" height="3" fill="#c8c8c8"/><rect x="333" y="16" width="1" height="3" fill="#c8c8c8"/><rect x="338" y="16" width="1" height="3" fill="#c8c8c8"/><rect x="343" y="16" width="1" height="3" fill="#c8c8c8"/><rect x="348" y="16" width="1" height="3" fill="#c8c8c8"/><rect x="353" y="16" width="1" height="3" fill="#c8c8c8"/><rect x="358" y="16" width="1" height="3" fill="#c8c8c8"/><rect x="363" y="16" width="1" height="3" fill="#c8c8c8"/><rect x="368" y="16" width="1" height="3" fill="#c8c8c8"/><rect x="373" y="16" width="1" height="3" fill="#c8c8c8"/><rect x="378" y="16" width="1" height="3" fill="#c8c8c8"/><rect x="383" y="16" width="1" height="3" fill="#c8c8c8"/><rect x="388" y="16" width="1" height="3" fill="#c8c8c8"/><rect x="393" y="16" width="1" height="3" fill="#c8c8c8"/><rect x="398" y="11" width="1" height="8" fill="#c8c8c8"/><rect x="402" y="16" width="1" height="3" fill="#c8c8c8"/><rect x="407" y="16" width="1" height="3" fill="#c8c8c8"/><rect x="412" y="16" width="1" height="3" fill="#c8c8c8"/><rect x="417" y="16" width="1" height="3" fill="#c8c8c8"/><rect x="422" y="16" width="1" height="3" fill="#c8c8c8"/><rect x="427" y="16" width="1" height="3" fill="#c8c8c8"/><rect x="432" y="16" width="1" height="3" fill="#c8c8c8"/><rect x="437" y="16" width="1" height="3" fill="#c8c8c8"/><rect x="442" y="16" width="1" height="3" fill="#c8c8c8"/><rect x="447" y="16" width="1" height="3" fill="#c8c8c8"/><rect x="452" y="16" width="1" height="3" fill="#c8c8c8"/><rect x="457" y="16" width="1" height="3" fill="#c8c8c8"/><rect x="462" y="16" width="1" height="3" fill="#c8c8c8"/><rect x="467" y="16" width="1" height="3" fill="#c8c8c8"/><rect x="472" y="16" width="1" height="3" fill="#c8c8c8"/><rect x="477" y="11" width="1" height="8" fill="#c8c8c8"/><rect x="482" y="16" width="1" height="3" fill="#c8c8c8"/><rect x="487" y="16" width="1" height="3" fill="#c8c8c8"/><rect x="492" y="16" width="1" height="3" fill="#c8c8c8"/><rect x="497" y="16" width="1" height="3" fill="#c8c8c8"/><rect x="502" y="16" width="1" height="3" fill="#c8c8c8"/><rect x="507" y="16" width="1" height="3" fill="#c8c8c8"/><rect x="512" y="16" width="1" height="3" fill="#c8c8c8"/><rect x="517" y="16" width="1" height="3" fill="#c8c8c8"/><rect x="522" y="16" width="1" height="3" fill="#c8c8c8"/><rect x="527" y="16" width="1" height="3" fill="#c8c8c8"/><rect x="531" y="16" width="1" height="3" fill="#c8c8c8"/><rect x="536" y="16" width="1" height="3" fill="#c8c8c8"/><rect x="541" y="16" width="1" height="3" fill="#c8c8c8"/><rect x="546" y="16" width="1" height="3" fill="#c8c8c8"/><rect x="551" y="16" width="1" height="3" fill="#c8c8c8"/><rect x="556" y="11" width="1" height="8" fill="#c8c8c8"/><rect x="561" y="16" width="1" height="3" fill="#c8c8c8"/><rect x="566" y="16" width="1" height="3" fill="#c8c8c8"/><rect x="571" y="16" width="1" height="3" fill="#c8c8c8"/><rect x="576" y="16" width="1" height="3" fill="#c8c8c8"/><rect x="581" y="16" width="1" height="3" fill="#c8c8c8"/><rect x="586" y="16" width="1" height="3" fill="#c8c8c8"/><rect x="591" y="16" width="1" height="3" fill="#c8c8c8"/><rect x="596" y="16" width="1" height="3" fill="#c8c8c8"/><rect x="601" y="16" width="1" height="3" fill="#c8c8c8"/><rect x="606" y="16" width="1" height="3" fill="#c8c8c8"/><rect x="611" y="16" width="1" height="3" fill="#c8c8c8"/><rect x="616" y="16" width="1" height="3" fill="#c8c8c8"/><rect x="621" y="16" width="1" height="3" fill="#c8c8c8"/><rect x="626" y="16" width="1" height="3" fill="#c8c8c8"/><rect x="631" y="16" width="1" height="3" fill="#c8c8c8"/><rect x="636" y="11" width="1" height="8" fill="#c8c8c8"/><rect x="641" y="16" width="1" height="3" fill="#c8c8c8"/><rect x="646" y="16" width="1" height="3" fill="#c8c8c8"/><rect x="651" y="16" width="1" height="3" fill="#c8c8c8"/><rect x="656" y="16" width="1" height="3" fill="#c8c8c8"/><rect x="661" y="16" width="1" height="3" fill="#c8c8c8"/><rect x="665" y="16" width="1" height="3" fill="#c8c8c8"/><rect x="670" y="16" width="1" height="3" fill="#c8c8c8"/><rect x="675" y="16" width="1" height="3" fill="#c8c8c8"/><rect x="680" y="16" width="1" height="3" fill="#c8c8c8"/><rect x="685" y="16" width="1" height="3" fill="#c8c8c8"/><rect x="690" y="16" width="1" height="3" fill="#c8c8c8"/><rect x="695" y="16" width="1" height="3" fill="#c8c8c8"/><rect x="700" y="16" width="1" height="3" fill="#c8c8c8"/><rect x="705" y="16" width="1" height="3" fill="#c8c8c8"/><rect x="710" y="16" width="1" height="3" fill="#c8c8c8"/></svg>
</div>
<svg class="a" style="left:303px;top:484px;shape-rendering:geometricPrecision" width="9" height="8" viewBox="0 0 9 8"><path d="M0 1H8.5L2.5 8H0Z" fill="#f0e000"/></svg>
<div class="a" style="left:303px;top:511px;width:1px;height:127px;background:#f0f0f0;"></div>
<svg class="a" style="left:302px;top:495px;shape-rendering:geometricPrecision" width="9" height="17" viewBox="0 0 9 17"><path d="M1 0.5H7.5V9L1 15.5Z" fill="#f4f4f4" stroke="#111" stroke-width="0.7"/><rect x="3" y="3" width="2" height="4" fill="#111"/></svg>
<svg class="a" style="left:962px;top:460px;" width="17" height="17" viewBox="0 0 17 17"><path d="M5.5 13.5V4.5H13.5V10.5H6" fill="none" stroke="#f0f0f0" stroke-width="1.8"/><rect x="7" y="6" width="5" height="3" fill="#333"/><path d="M5 10L8 11L5 14Z" fill="#f0f0f0"/></svg>
<svg class="a" style="left:965px;top:482px;" width="12" height="8" viewBox="0 0 12 8"><path d="M2 6L6 2L10 6Z" fill="#363636"/></svg>
<svg class="a" style="left:965px;top:584px;" width="12" height="8" viewBox="0 0 12 8"><path d="M2 2L6 6L10 2Z" fill="#363636"/></svg>
<div class="a" style="left:967px;top:628px;width:7px;height:2px;background:#3c3c3c;"></div>
<div class="a" style="left:967px;top:606px;width:7px;height:2px;background:#3c3c3c;"></div>
<div class="a" style="left:969.5px;top:603px;width:2px;height:8px;background:#3c3c3c;"></div>
<svg class="a" style="left:307px;top:642px;shape-rendering:geometricPrecision" width="6" height="9" viewBox="0 0 6 9"><path d="M5 0.5V8.5L0.5 4.5Z" fill="#e0e0e0"/></svg>
<div class="a" style="left:326px;top:642px;width:2px;height:9px;background:#2a2a2a;"></div>
<div class="a" style="left:898px;top:642px;width:2px;height:9px;background:#2a2a2a;"></div>
<svg class="a" style="left:911px;top:642px;shape-rendering:geometricPrecision" width="6" height="9" viewBox="0 0 6 9"><path d="M0.5 0.5V8.5L5 4.5Z" fill="#e0e0e0"/></svg>
<div class="a" style="left:928px;top:646px;width:7px;height:2px;background:#f0f0f0;"></div>
<div class="a" style="left:930.5px;top:643.5px;width:2px;height:7px;background:#f0f0f0;"></div>
<div class="a" style="left:951px;top:646px;width:7px;height:2px;background:#f0f0f0;"></div>
<svg class="a" style="left:966px;top:642px;shape-rendering:geometricPrecision" width="11" height="11" viewBox="0 0 11 11"><circle cx="4.5" cy="4.5" r="3.4" fill="none" stroke="#f0f0f0" stroke-width="1.3"/><path d="M7 7L9.5 9.5" stroke="#f0f0f0" stroke-width="2"/></svg>
<div class="t" style="left:52px;top:658px;color:#e2e2e2;font-size:12px;letter-spacing:0.35px">速率: 0.00</div>
<div class="a" style="left:144px;top:666px;width:137px;height:2px;background:#242424;"></div>
<svg class="a" style="left:205px;top:660px;" width="13" height="13" viewBox="0 0 13 13"><rect x="0.5" y="0.5" width="12" height="12" fill="#f4f4f4" stroke="#111"/><rect x="3.5" y="3.5" width="1.5" height="5" fill="#111"/><rect x="8" y="3.5" width="1.5" height="5" fill="#111"/></svg>
<svg class="a" style="left:220px;top:674px;shape-rendering:geometricPrecision" width="11" height="6" viewBox="0 0 11 6"><path d="M0.5 5.5L5.5 0.5L10.5 5.5Z" fill="#f4f4f4"/></svg>
<svg class="a" style="left:311px;top:664px;shape-rendering:geometricPrecision" width="12" height="17" viewBox="0 0 12 17"><rect x="2.5" y="0.5" width="7" height="11" rx="3.5" fill="#e89aa6" stroke="#2a1a1a" stroke-width="0.8"/><path d="M1.5 8.5C1.5 12.5 10.5 12.5 10.5 8.5" fill="none" stroke="#f0f0f0" stroke-width="1.1"/><rect x="5.4" y="12" width="1.2" height="3" fill="#f0f0f0"/><rect x="3" y="14.6" width="6" height="1.4" fill="#f0f0f0"/></svg>
<svg class="a" style="left:335px;top:664px;shape-rendering:geometricPrecision" width="16" height="17" viewBox="0 0 16 17"><path d="M2.9 6.5A5.6 5.6 0 1 1 4 13" fill="none" stroke="#111" stroke-width="3.4"/><path d="M2.9 6.5A5.6 5.6 0 1 1 4 13" fill="none" stroke="#f0f0f0" stroke-width="1.9"/><path d="M1 15.5L0.8 8.5L7 11.5Z" fill="#f0f0f0" stroke="#111" stroke-width="0.8"/><rect x="6.5" y="1" width="2.6" height="6.5" fill="#8cc8e0" stroke="#111" stroke-width="0.8"/></svg>
<svg class="a" style="left:362px;top:667px;shape-rendering:geometricPrecision" width="14" height="12" viewBox="0 0 14 12"><rect x="0.5" y="0.5" width="3" height="11" fill="#f0f0f0" stroke="#111"/><path d="M5.5 0.5L13.5 6L5.5 11.5Z" fill="#f0f0f0" stroke="#111" stroke-width="0.8"/></svg>
<svg class="a" style="left:389px;top:665px;shape-rendering:geometricPrecision" width="13" height="16" viewBox="0 0 13 16"><path d="M0.5 0.5L12.5 8L0.5 15.5Z" fill="#f0f0f0" stroke="#111" stroke-width="0.8"/></svg>
<svg class="a" style="left:414px;top:666px;" width="14" height="14" viewBox="0 0 14 14"><rect x="0.5" y="0.5" width="5" height="13" fill="#f0f0f0" stroke="#111"/><rect x="8.5" y="0.5" width="5" height="13" fill="#f0f0f0" stroke="#111"/></svg>
<svg class="a" style="left:440px;top:666px;" width="14" height="14" viewBox="0 0 14 14"><rect x="0.5" y="0.5" width="13" height="13" fill="#f0f0f0" stroke="#111"/></svg>
<svg class="a" style="left:467px;top:667px;shape-rendering:geometricPrecision" width="12" height="12" viewBox="0 0 12 12"><rect x="0.5" y="0.5" width="3" height="11" fill="#f0f0f0" stroke="#111"/><path d="M11.5 0.5L3.5 6L11.5 11.5Z" fill="#f0f0f0" stroke="#111" stroke-width="0.8"/></svg>
<svg class="a" style="left:493px;top:667px;shape-rendering:geometricPrecision" width="12" height="12" viewBox="0 0 12 12"><rect x="8.5" y="0.5" width="3" height="11" fill="#f0f0f0" stroke="#111"/><path d="M0.5 0.5L8.5 6L0.5 11.5Z" fill="#f0f0f0" stroke="#111" stroke-width="0.8"/></svg>
<svg class="a" style="left:518px;top:667px;shape-rendering:geometricPrecision" width="15" height="12" viewBox="0 0 15 12"><path d="M6.5 0.5L0.5 6L6.5 11.5Z" fill="#f0f0f0" stroke="#111" stroke-width="0.8"/><rect x="7.5" y="0.5" width="3" height="11" fill="#f0f0f0" stroke="#111"/><rect x="11.5" y="0.5" width="3" height="11" fill="#f0f0f0" stroke="#111"/></svg>
<svg class="a" style="left:543px;top:667px;shape-rendering:geometricPrecision" width="15" height="12" viewBox="0 0 15 12"><rect x="0.5" y="0.5" width="3" height="11" fill="#f0f0f0" stroke="#111"/><rect x="4.5" y="0.5" width="3" height="11" fill="#f0f0f0" stroke="#111"/><path d="M8.5 0.5L14.5 6L8.5 11.5Z" fill="#f0f0f0" stroke="#111" stroke-width="0.8"/></svg>
<div class="a" style="left:567px;top:664px;width:1px;height:19px;background:#2a2a2a;"></div>
<div class="a" style="left:574px;top:662px;width:22px;height:21px;background:#1ea0e6;"></div>
<svg class="a" style="left:577px;top:665px;shape-rendering:geometricPrecision" width="17" height="15" viewBox="0 0 17 15"><path d="M1.5 1.5V12L4 9.5L6.5 14L8.5 13L6.5 9H10Z" fill="#f0f0f0" stroke="#111" stroke-width="0.8"/><path d="M10.5 0.5H15.5V6L14 8V14.5H12V8L10.5 6Z" fill="#f0f0f0" stroke="#111" stroke-width="0.8"/></svg>
<svg class="a" style="left:603px;top:671px;shape-rendering:geometricPrecision" width="8" height="5" viewBox="0 0 8 5"><path d="M0 0.5H8L4 4.5Z" fill="#e6e6e6"/></svg>
<svg class="a" style="left:621px;top:665px;shape-rendering:geometricPrecision" width="15" height="16" viewBox="0 0 15 16"><path d="M0.5 1.5V12L3 9.5L5.5 14L7.5 13L5.5 9H9Z" fill="#f0f0f0" stroke="#111" stroke-width="0.8"/><path d="M9 3L12 8L8.5 13" fill="none" stroke="#f0f0f0" stroke-width="1.2"/><circle cx="9.5" cy="2.8" r="2.2" fill="#f0f0f0"/><circle cx="12" cy="8" r="2.2" fill="#f0f0f0"/><circle cx="9" cy="13" r="2.2" fill="#f0f0f0"/></svg>
<svg class="a" style="left:646px;top:665px;shape-rendering:geometricPrecision" width="16" height="15" viewBox="0 0 16 15"><rect x="0.5" y="0.5" width="10" height="10" fill="none" stroke="#f0f0f0" stroke-dasharray="2 1"/><path d="M6.5 4.5V14.5L9 12L11 15L12.5 14L11 11.5H14Z" fill="#f0f0f0" stroke="#111" stroke-width="0.8"/></svg>
<svg class="a" style="left:672px;top:665px;shape-rendering:geometricPrecision" width="16" height="16" viewBox="0 0 16 16"><rect x="0.5" y="0.5" width="10" height="10" fill="none" stroke="#f0f0f0" stroke-dasharray="2 1"/><path d="M10 10L14.5 14.5" stroke="#111" stroke-width="3"/><path d="M10 10L14.5 14.5" stroke="#f0f0f0" stroke-width="1.8"/><circle cx="8" cy="8" r="4" fill="#6ab8d8" stroke="#111" stroke-width="2.2"/><circle cx="8" cy="8" r="4" fill="none" stroke="#f0f0f0" stroke-width="1"/></svg>
<div class="a" style="left:696px;top:664px;width:1px;height:19px;background:#2a2a2a;"></div>
<svg class="a" style="left:707px;top:667px;shape-rendering:geometricPrecision" width="14" height="13" viewBox="0 0 14 13"><path d="M1 1L13 12M13 1L1 12" stroke="#646464" stroke-width="1.6"/></svg>
<svg class="a" style="left:732px;top:666px;" width="16" height="15" viewBox="0 0 16 15"><defs><pattern id="h732" width="2" height="2" patternUnits="userSpaceOnUse"><rect x="0" y="0" width="1" height="1" fill="#646464"/><rect x="1" y="1" width="1" height="1" fill="#646464"/></pattern></defs><path d="M0 4L6 3V12L0 11Z" fill="url(#h732)"/><path d="M16 4L10 3V12L16 11Z" fill="url(#h732)"/><rect x="6.5" y="0.5" width="3" height="14" fill="#646464" stroke="#3a3a3a" stroke-width="0.6"/></svg>
<svg class="a" style="left:759px;top:666px;" width="16" height="15" viewBox="0 0 16 15"><defs><pattern id="h759" width="2" height="2" patternUnits="userSpaceOnUse"><rect x="0" y="0" width="1" height="1" fill="#646464"/><rect x="1" y="1" width="1" height="1" fill="#646464"/></pattern></defs><rect x="0" y="4" width="6" height="7" fill="url(#h759)"/><rect x="9" y="4" width="5" height="8" fill="#646464" stroke="#3a3a3a" stroke-width="0.6"/><rect x="6.5" y="0.5" width="3" height="14" fill="#646464" stroke="#3a3a3a" stroke-width="0.6"/></svg>
<svg class="a" style="left:784px;top:666px;" width="16" height="15" viewBox="0 0 16 15"><defs><pattern id="h784" width="2" height="2" patternUnits="userSpaceOnUse"><rect x="0" y="0" width="1" height="1" fill="#646464"/><rect x="1" y="1" width="1" height="1" fill="#646464"/></pattern></defs><rect x="2" y="4" width="5" height="8" fill="#646464" stroke="#3a3a3a" stroke-width="0.6"/><rect x="10" y="4" width="6" height="7" fill="url(#h784)"/><rect x="6.5" y="0.5" width="3" height="14" fill="#646464" stroke="#3a3a3a" stroke-width="0.6"/></svg>
<svg class="a" style="left:810px;top:666px;" width="16" height="15" viewBox="0 0 16 15"><defs><pattern id="h810" width="2" height="2" patternUnits="userSpaceOnUse"><rect x="0" y="0" width="1" height="1" fill="#646464"/><rect x="1" y="1" width="1" height="1" fill="#646464"/></pattern></defs><rect x="1" y="4" width="4" height="8" fill="#646464" stroke="#3a3a3a" stroke-width="0.6"/><rect x="10" y="4" width="5" height="8" fill="#646464" stroke="#3a3a3a" stroke-width="0.6"/><rect x="6.5" y="0.5" width="3" height="14" fill="#646464" stroke="#3a3a3a" stroke-width="0.6"/></svg>
<svg class="a" style="left:837px;top:666px;" width="16" height="15" viewBox="0 0 16 15"><defs><pattern id="h837" width="2" height="2" patternUnits="userSpaceOnUse"><rect x="0" y="0" width="1" height="1" fill="#646464"/><rect x="1" y="1" width="1" height="1" fill="#646464"/></pattern></defs><path d="M1 5L5 4V12L1 11Z" fill="#646464" stroke="#3a3a3a" stroke-width="0.6"/><path d="M15 5L10 4V12L15 11Z" fill="#646464" stroke="#3a3a3a" stroke-width="0.6"/><rect x="6.5" y="0.5" width="3" height="14" fill="#646464" stroke="#3a3a3a" stroke-width="0.6"/></svg>
<svg class="a" style="left:864px;top:667px;shape-rendering:geometricPrecision" width="12" height="14" viewBox="0 0 12 14"><path d="M3 6V4A3 3 0 0 1 9 4V6" fill="none" stroke="#646464" stroke-width="2"/><rect x="0.5" y="6" width="11" height="8" fill="#646464"/><rect x="5" y="8" width="2" height="3" fill="#454545"/></svg>
<div class="a" style="left:886px;top:664px;width:1px;height:19px;background:#2a2a2a;"></div>
<svg class="a" style="left:897px;top:665px;shape-rendering:geometricPrecision" width="14" height="16" viewBox="0 0 14 16"><path d="M0.5 0.5H13.5V9.5H5L0.5 15Z" fill="#cbb55a" stroke="#111" stroke-width="0.8"/></svg>
<svg class="a" style="left:922px;top:665px;shape-rendering:geometricPrecision" width="17" height="16" viewBox="0 0 17 16"><path d="M0.5 0.5H7V7L3 9.5V15.5H0.5Z" fill="#6cc270" stroke="#111" stroke-width="0.8"/><path d="M16 0.5H9.5V7L13.5 9.5V15.5H16Z" fill="#6cc270" stroke="#111" stroke-width="0.8"/></svg>
<div class="a" style="left:946px;top:664px;width:1px;height:19px;background:#2a2a2a;"></div>
<div class="a" style="left:953px;top:662px;width:22px;height:21px;background:#1ea0e6;"></div>
<svg class="a" style="left:956px;top:664px;shape-rendering:geometricPrecision" width="16" height="17" viewBox="0 0 16 17"><path d="M2.5 13V7A5.5 5.5 0 0 1 13.5 7V13" fill="none" stroke="#111" stroke-width="4.6"/><path d="M2.5 13V7A5.5 5.5 0 0 1 13.5 7V13" fill="none" stroke="#e85a64" stroke-width="3"/><rect x="0.5" y="12.5" width="4" height="2.5" fill="#f4f4f4" stroke="#111" stroke-width="0.7"/><rect x="11.5" y="12.5" width="4" height="2.5" fill="#f4f4f4" stroke="#111" stroke-width="0.7"/></svg>
<div class="t" style="left:787px;top:694px;color:#dedede;font-size:12px;letter-spacing:0.4px">录制时间(2 个通道): 14:43:50</div>
</body></html>
